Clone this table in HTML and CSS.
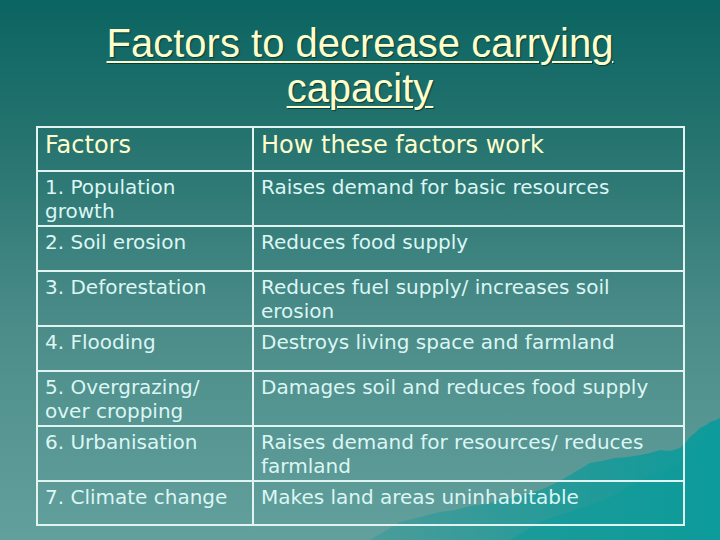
FILE: index.html
```html
<!DOCTYPE html>
<html>
<head>
<meta charset="utf-8">
<link rel="stylesheet" href="styles.css">
</head>
<body>
<div class="slide">
  <svg class="mountain" viewBox="0 0 360 130" width="360" height="130" aria-hidden="true">
    <defs>
      <linearGradient id="mt" x1="0" y1="0" x2="1" y2="0">
        <stop offset="0" stop-color="#1f9796" stop-opacity="0.35"/>
        <stop offset="0.45" stop-color="#189a99" stop-opacity="0.75"/>
        <stop offset="1" stop-color="#0e9b9b" stop-opacity="1"/>
      </linearGradient>
    </defs>
    <path fill="url(#mt)" d="M10 130 L25 121 L40 112 L60 107 L80 102 L95 100 L110 96 L125 94 L140 90 L160 86 L180 80 L192 75 L205 68 L215 62 L230 53 L242 51 L255 48 L268 47 L280 45 L290 43 L300 40 L310 41 L320 38 L325 33 L330 27 L336 22 L340 18 L346 15 L350 12 L356 10 L360 8 L360 130 Z"/>
    <path fill="#0c9a9a" opacity="0.55" d="M150 130 L180 112 L215 100 L245 90 L270 76 L295 64 L318 55 L332 40 L345 26 L360 20 L360 130 Z"/>
  </svg>
  <h1 class="title">Factors to decrease carrying<br>capacity</h1>
  <table class="factors">
    <tr class="head h44"><td class="c1">Factors</td><td>How these factors work</td></tr>
    <tr class="h55"><td class="c1">1. Population growth</td><td>Raises demand for basic resources</td></tr>
    <tr class="h45"><td class="c1">2. Soil erosion</td><td>Reduces food supply</td></tr>
    <tr class="h55"><td class="c1">3. Deforestation</td><td>Reduces fuel supply/ increases soil erosion</td></tr>
    <tr class="h45"><td class="c1">4. Flooding</td><td>Destroys living space and farmland</td></tr>
    <tr class="h55"><td class="c1">5. Overgrazing/<br>over cropping</td><td>Damages soil and reduces food supply</td></tr>
    <tr class="h55"><td class="c1">6. Urbanisation</td><td>Raises demand for resources/ reduces farmland</td></tr>
    <tr class="h44"><td class="c1">7. Climate change</td><td>Makes land areas uninhabitable</td></tr>
  </table>
</div>
</body>
</html>
```
FILE: styles.css
```css
html, body {
  margin: 0;
  padding: 0;
}
body {
  width: 720px;
  height: 540px;
  overflow: hidden;
}
.slide {
  position: relative;
  width: 720px;
  height: 540px;
  overflow: hidden;
  background: linear-gradient(180deg, #0a6461 0%, #2a7672 30%, #4b8c89 60%, #62a09d 100%);
}
.mountain {
  position: absolute;
  right: 0;
  bottom: 0;
  z-index: 0;
}
.title {
  position: relative;
  z-index: 1;
  margin: 0;
  padding-top: 21px;
  height: 105px;
  text-align: center;
  font-family: "Liberation Sans", Arial, sans-serif;
  font-weight: normal;
  font-size: 40px;
  line-height: 45px;
  color: #ffffcc;
  text-decoration: underline;
  text-decoration-thickness: 2px;
  text-underline-offset: 4px;
  text-shadow: 1px 1px 1px rgba(0, 40, 38, 0.7);
}
.factors {
  position: relative;
  z-index: 1;
  margin-left: 36px;
  width: 649px;
  border-collapse: collapse;
  border: 2px solid #e2f4f2;
  font-family: "DejaVu Sans", Verdana, sans-serif;
  font-size: 20px;
  line-height: 24px;
  color: #dcf6f4;
}
.factors td {
  border: 2px solid #e2f4f2;
  vertical-align: top;
  padding: 3px 7px 0 7px;
}
.factors td.c1 {
  width: 200px;
}
.head td {
  font-size: 24px;
  line-height: 28px;
  color: #ffffcc;
  padding-top: 3px;
}
.h44 { height: 44px; }
.h45 { height: 45px; }
.h55 { height: 55px; }
```
